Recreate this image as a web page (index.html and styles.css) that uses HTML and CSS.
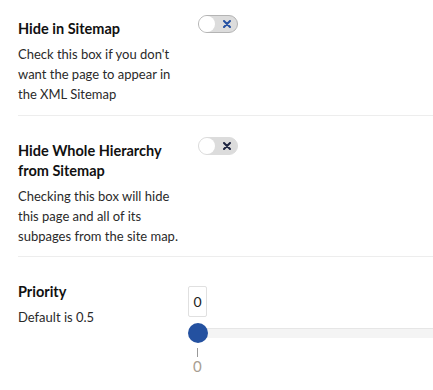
FILE: index.html
```html
<!doctype html>
<html lang="en">
	<head>
		<meta charset="utf-8" />
		<meta name="viewport" content="width=device-width, initial-scale=1" />
		<title>Sitemap settings</title>
		<link rel="stylesheet" href="styles.css">
	</head>
	<body>
		<main class="seo-fields">
			<div class="seo-field seo-field-first">
				<div class="seo-label">
					<h3 class="seo-title">Hide in Sitemap</h3>
					<p class="seo-help">Check this box if you don't want the page to appear in the XML Sitemap</p>
				</div>
				<div class="seo-control">
					<span class="seo-toggle seo-toggle-focus">
						<span class="seo-toggle-knob"></span>
						<svg class="seo-toggle-mark seo-toggle-mark-blue" width="8" height="8" viewBox="0 0 8 8">
							<path d="M1 1 L7 7 M7 1 L1 7" stroke="currentColor" stroke-width="2" stroke-linecap="round" />
						</svg>
					</span>
				</div>
			</div>
			<div class="seo-field">
				<div class="seo-label">
					<h3 class="seo-title">Hide Whole Hierarchy from Sitemap</h3>
					<p class="seo-help">Checking this box will hide this page and all of its subpages from the site map.</p>
				</div>
				<div class="seo-control">
					<span class="seo-toggle">
						<span class="seo-toggle-knob"></span>
						<svg class="seo-toggle-mark" width="8" height="8" viewBox="0 0 8 8">
							<path d="M1 1 L7 7 M7 1 L1 7" stroke="currentColor" stroke-width="2" stroke-linecap="round" />
						</svg>
					</span>
				</div>
			</div>
			<div class="seo-field seo-field-last">
				<div class="seo-label">
					<h3 class="seo-title">Priority</h3>
					<p class="seo-help">Default is 0.5</p>
				</div>
				<div class="seo-control seo-range">
					<span class="seo-range-value">0</span>
					<div class="seo-range-track">
						<span class="seo-range-thumb"></span>
					</div>
					<span class="seo-range-tick"></span>
					<span class="seo-range-min">0</span>
				</div>
			</div>
		</main>
	</body>
</html>
```

FILE: styles.css
```css
/* Page */
body {
	background-color: #fff;
	color: #222;
	font-family: Lato, "Liberation Sans", sans-serif;
	margin: 0;
	overflow: hidden;
}

.seo-fields {
	padding-left: 18px;
}

/* Field rows */
.seo-field {
	border-bottom: 1px solid #ededed;
	display: flex;
	padding: 25px 0 10px;
}

.seo-field-first {
	padding-top: 19px;
	padding-bottom: 11px;
}

.seo-field-last {
	border-bottom: none;
}

.seo-label {
	flex: 0 0 170px;
	width: 170px;
}

.seo-title {
	color: #111;
	font-size: 14.5px;
	font-weight: 700;
	line-height: 20px;
	margin: 0 0 5px;
	padding-right: 20px;
}

.seo-help {
	color: #2a2a2a;
	font-size: 13px;
	line-height: 20px;
	margin: 0;
	padding-right: 10px;
}

.seo-control {
	flex: 1;
}

/* Toggle */
.seo-toggle {
	align-items: center;
	background-color: #dcdcdc;
	border: 1px solid #dcdcdc;
	border-radius: 9px;
	box-sizing: border-box;
	display: flex;
	height: 18px;
	margin: -4px 0 0 10px;
	width: 40px;
}

.seo-toggle-focus {
	border-color: #b4b4b4;
}

.seo-toggle-knob {
	background-color: #fff;
	border-radius: 50%;
	height: 16px;
	width: 16px;
}

.seo-toggle-mark {
	color: #1d2440;
	margin-left: 8px;
}

.seo-toggle-mark-blue {
	color: #2450a3;
}

/* Range */
.seo-range {
	display: flex;
	flex-direction: column;
	margin-top: 4px;
}

.seo-range-value {
	align-items: center;
	border: 1px solid #e0e0e0;
	border-radius: 2px;
	box-sizing: border-box;
	color: #222;
	display: flex;
	font-size: 14px;
	height: 31px;
	justify-content: center;
	width: 19px;
}

.seo-range-track {
	background-color: #f4f4f4;
	border-top: 1px solid #e6e6e6;
	box-sizing: border-box;
	height: 10px;
	margin: 11px 0 0 10px;
	position: relative;
}

.seo-range-thumb {
	background-color: #2451a0;
	border-radius: 50%;
	height: 20px;
	left: -10px;
	position: absolute;
	top: -6px;
	width: 20px;
}

.seo-range-tick {
	background-color: #999;
	height: 9px;
	margin: 10px 0 0 9px;
	width: 1px;
}

.seo-range-min {
	color: #a89e92;
	font-size: 15px;
	line-height: 15px;
	margin: 2px 0 0 5px;
}
```
